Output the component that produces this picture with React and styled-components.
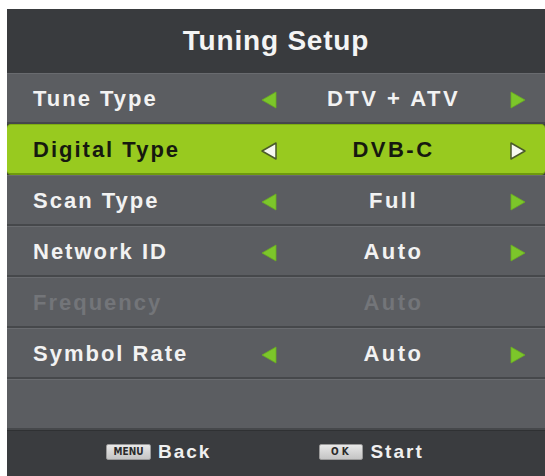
import styled, { createGlobalStyle } from 'styled-components';

const GlobalStyle = createGlobalStyle`
  html, body {
    margin: 0;
    padding: 0;
    background: #ffffff;
  }
  body {
    font-family: "Liberation Sans", Arial, sans-serif;
  }
`;

const Panel = styled.div`
  margin: 9px 0 0 7px;
  width: 538px;
  height: 467px;
  display: flex;
  flex-direction: column;
  background: #3b3d40;
  overflow: hidden;
`;

const Header = styled.div`
  height: 64px;
  display: flex;
  align-items: center;
  justify-content: center;
  color: #f4f4f4;
  font-size: 28px;
  font-weight: bold;
  letter-spacing: 0.8px;
  background: #393b3e;
  flex-shrink: 0;
`;

const List = styled.div`
  display: flex;
  flex-direction: column;
`;

const Row = styled.div`
  height: 51px;
  box-sizing: border-box;
  display: grid;
  grid-template-columns: 228px 16px 233px 16px;
  align-items: center;
  padding-left: 26px;
  background: ${p => (p.$active ? '#98ca1f' : '#5b5d61')};
  border-top: 1px solid ${p => (p.$active ? '#7fae12' : '#696b6f')};
  border-bottom: 2px solid ${p => (p.$active ? '#6f9a0e' : '#46484b')};
  border-radius: ${p => (p.$active ? '4px' : '0')};
  color: ${p => (p.$dim ? '#737579' : p.$active ? '#16190f' : '#f2f2f2')};
  font-size: 22px;
  font-weight: bold;
`;

const Label = styled.span`
  letter-spacing: 2px;
  white-space: nowrap;
  padding-top: 2px;
`;

const Value = styled.span`
  text-align: center;
  letter-spacing: 2.5px;
  white-space: nowrap;
  padding-top: 2px;
`;

const ArrowCell = styled.span`
  display: flex;
  align-items: center;
  justify-content: center;
  padding-top: 3px;
`;

const Footer = styled.div`
  flex: 1;
  display: flex;
  align-items: center;
  gap: 108px;
  padding: 0 0 4px 99px;
  background: #3a3c3f;
  border-top: 1px solid #2f3133;
`;

const Hint = styled.div`
  display: flex;
  align-items: center;
  gap: 7px;
  color: #f0f0f0;
  font-size: 19px;
  font-weight: bold;
  letter-spacing: 2px;
`;

const Key = styled.span`
  width: ${p => p.$w}px;
  height: 16px;
  display: flex;
  align-items: center;
  justify-content: center;
  background: linear-gradient(#e8e8e8, #c4c4c4);
  border: 1px solid #9a9a9a;
  border-radius: 2px;
  box-sizing: border-box;
  color: #2a2a2a;
  font-family: "DejaVu Sans Condensed", "Liberation Sans Narrow", sans-serif;
  font-size: 10px;
  font-weight: bold;
  letter-spacing: ${p => p.$ls || 0}px;
`;

function Arrow({ dir, active }) {
  const points = dir === 'left' ? '15,1 15,17 1,9' : '1,1 1,17 15,9';
  return (
    <svg width="16" height="18" viewBox="0 0 16 18" style={{ display: 'block' }}>
      <polygon
        points={points}
        fill={active ? '#f6f8f0' : '#7cc62a'}
        stroke={active ? '#4a5a2a' : '#6aae20'}
        strokeWidth={active ? 1.5 : 0.8}
        strokeLinejoin="round"
      />
    </svg>
  );
}

const items = [
  { label: 'Tune Type', value: 'DTV + ATV' },
  { label: 'Digital Type', value: 'DVB-C', active: true },
  { label: 'Scan Type', value: 'Full' },
  { label: 'Network ID', value: 'Auto' },
  { label: 'Frequency', value: 'Auto', dim: true },
  { label: 'Symbol Rate', value: 'Auto' },
  { label: '', value: '', empty: true },
];

export default function App() {
  return (
    <>
      <GlobalStyle />
      <Panel>
        <Header>Tuning Setup</Header>
        <List>
          {items.map((it, i) => {
            const arrows = !it.dim && !it.empty;
            return (
              <Row key={i} $active={it.active} $dim={it.dim}>
                <Label>{it.label}</Label>
                <ArrowCell>{arrows && <Arrow dir="left" active={it.active} />}</ArrowCell>
                <Value>{it.value}</Value>
                <ArrowCell>{arrows && <Arrow dir="right" active={it.active} />}</ArrowCell>
              </Row>
            );
          })}
        </List>
        <Footer>
          <Hint>
            <Key $w={45}>MENU</Key>
            Back
          </Hint>
          <Hint>
            <Key $w={44} $ls={3}>OK</Key>
            Start
          </Hint>
        </Footer>
      </Panel>
    </>
  );
}
